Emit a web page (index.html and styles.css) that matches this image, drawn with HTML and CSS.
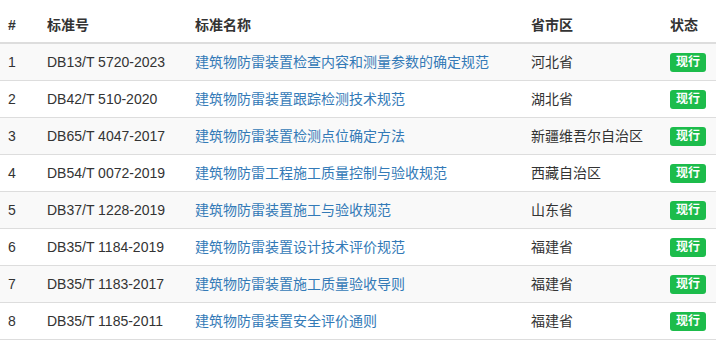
FILE: index.html
```html
<!DOCTYPE html>
<html lang="zh">
<head>
<meta charset="utf-8">
<title>标准列表</title>
<link rel="stylesheet" href="styles.css">
</head>
<body>
<table class="std-table">
  <colgroup>
    <col class="c-num"><col class="c-code"><col class="c-name"><col class="c-region"><col class="c-status">
  </colgroup>
  <thead>
    <tr><th>#</th><th>标准号</th><th>标准名称</th><th>省市区</th><th>状态</th></tr>
  </thead>
  <tbody>
    <tr><td>1</td><td>DB13/T 5720-2023</td><td><a href="#">建筑物防雷装置检查内容和测量参数的确定规范</a></td><td>河北省</td><td><span class="badge">现行</span></td></tr>
    <tr><td>2</td><td>DB42/T 510-2020</td><td><a href="#">建筑物防雷装置跟踪检测技术规范</a></td><td>湖北省</td><td><span class="badge">现行</span></td></tr>
    <tr><td>3</td><td>DB65/T 4047-2017</td><td><a href="#">建筑物防雷装置检测点位确定方法</a></td><td>新疆维吾尔自治区</td><td><span class="badge">现行</span></td></tr>
    <tr><td>4</td><td>DB54/T 0072-2019</td><td><a href="#">建筑物防雷工程施工质量控制与验收规范</a></td><td>西藏自治区</td><td><span class="badge">现行</span></td></tr>
    <tr><td>5</td><td>DB37/T 1228-2019</td><td><a href="#">建筑物防雷装置施工与验收规范</a></td><td>山东省</td><td><span class="badge">现行</span></td></tr>
    <tr><td>6</td><td>DB35/T 1184-2019</td><td><a href="#">建筑物防雷装置设计技术评价规范</a></td><td>福建省</td><td><span class="badge">现行</span></td></tr>
    <tr><td>7</td><td>DB35/T 1183-2017</td><td><a href="#">建筑物防雷装置施工质量验收导则</a></td><td>福建省</td><td><span class="badge">现行</span></td></tr>
    <tr><td>8</td><td>DB35/T 1185-2011</td><td><a href="#">建筑物防雷装置安全评价通则</a></td><td>福建省</td><td><span class="badge">现行</span></td></tr>
  </tbody>
</table>
</body>
</html>
```
FILE: styles.css
```css
html, body {
  margin: 0;
  padding: 0;
  background: #fff;
}
body {
  padding-top: 6px;
  font-family: "Liberation Sans", Arial, "Noto Sans CJK SC", sans-serif;
  font-size: 14px;
  line-height: 20px;
  color: #333;
}
.std-table {
  width: 716px;
  border-collapse: collapse;
  border-spacing: 0;
  table-layout: fixed;
}
.c-num { width: 39px; }
.c-code { width: 148px; }
.c-name { width: 336px; }
.c-region { width: 139px; }
.c-status { width: 54px; }
.std-table th,
.std-table td {
  padding: 0 8px;
  height: 36px;
  text-align: left;
  vertical-align: middle;
  white-space: nowrap;
}
.std-table th {
  padding-top: 2px;
  height: 34px;
  font-weight: bold;
  border-bottom: 2px solid #ddd;
}
.std-table td {
  border-top: 1px solid #ddd;
}
.std-table tbody tr:nth-child(odd) {
  background: #f9f9f9;
}
.std-table tbody tr:last-child td {
  border-bottom: 1px solid #ddd;
}
.std-table a {
  color: #337ab7;
  text-decoration: none;
}
.badge {
  display: inline-block;
  background: #1cbc4b;
  color: #fff;
  font-weight: bold;
  font-size: 12px;
  line-height: 12px;
  padding: 3px 6px 4px;
  border-radius: 3px;
  vertical-align: middle;
}
```
